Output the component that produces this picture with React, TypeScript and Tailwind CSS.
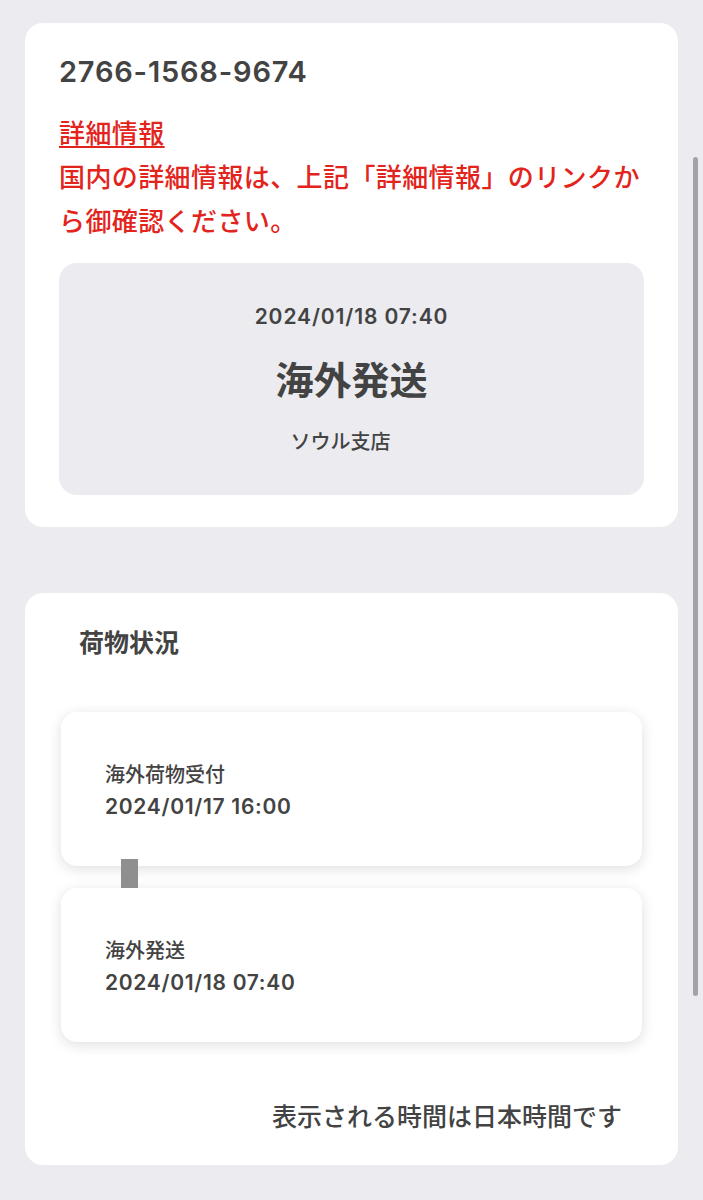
export default function App() {
  const events = [
    { label: "海外荷物受付", time: "2024/01/17 16:00" },
    { label: "海外発送", time: "2024/01/18 07:40" },
  ];

  const latin = { fontFamily: 'Inter, "Noto Sans CJK JP", sans-serif' };

  return (
    <div
      className="relative min-h-[1200px] bg-[#ebebf0] pt-[23px] pb-[37px] text-[#434343]"
      style={{ fontFamily: '"Noto Sans CJK JP", "Noto Sans", sans-serif' }}
    >
      {/* scroll indicator */}
      <div className="absolute right-[5px] top-[157px] h-[839px] w-[5px] rounded-full bg-[#a3a3a7]" />

      <div className="mx-[25px] rounded-[18px] bg-white px-[34px] pt-[31px] pb-[32px]">
        <div className="text-[29px] font-semibold leading-[36px] tracking-[0.8px]" style={latin}>
          2766-1568-9674
        </div>
        <div className="mt-[20px] text-[26px] font-medium leading-[44px] tracking-[0.4px] text-[#e3241c]">
          <a className="underline underline-offset-[3px] decoration-[2px]">詳細情報</a>
          <p>国内の詳細情報は、上記「詳細情報」のリンクから御確認ください。</p>
        </div>
        <div className="mt-[21px] flex flex-col items-center rounded-[18px] bg-[#ebebf0] pt-[40px] pb-[40px]">
          <div className="text-[21px] font-semibold leading-[28px] tracking-[0.9px]" style={latin}>
            2024/01/18 07:40
          </div>
          <div className="mt-[23px] text-[38px] font-semibold leading-[48px]">海外発送</div>
          <div className="mt-[25px] pr-[22px] text-[20px] font-medium leading-[28px]">ソウル支店</div>
        </div>
      </div>

      <div className="mx-[25px] mt-[66px] rounded-[18px] bg-white px-[36px] pt-[32px] pb-[33px]">
        <div className="ml-[18px] text-[25px] font-semibold leading-[32px]">荷物状況</div>
        <div className="mt-[55px] flex flex-col">
          {events.map((e, i) => (
            <div key={e.label} className="flex flex-col">
              {i > 0 && (
                <div className="relative z-10 -mt-[7px] ml-[60px] h-[29px] w-[17px] bg-[#8f8f8f]" />
              )}
              <div className="rounded-[16px] bg-white pl-[44px] pt-[45px] pb-[43px] shadow-[0_3px_14px_rgba(0,0,0,0.13)]">
                <div className="text-[20px] font-medium leading-[33px]">{e.label}</div>
                <div className="text-[21px] font-semibold leading-[33px] tracking-[0.7px]" style={latin}>
                  {e.time}
                </div>
              </div>
            </div>
          ))}
        </div>
        <div className="mt-[56px] mr-[20px] text-right text-[25px] font-medium leading-[34px]">
          表示される時間は日本時間です
        </div>
      </div>
    </div>
  );
}
